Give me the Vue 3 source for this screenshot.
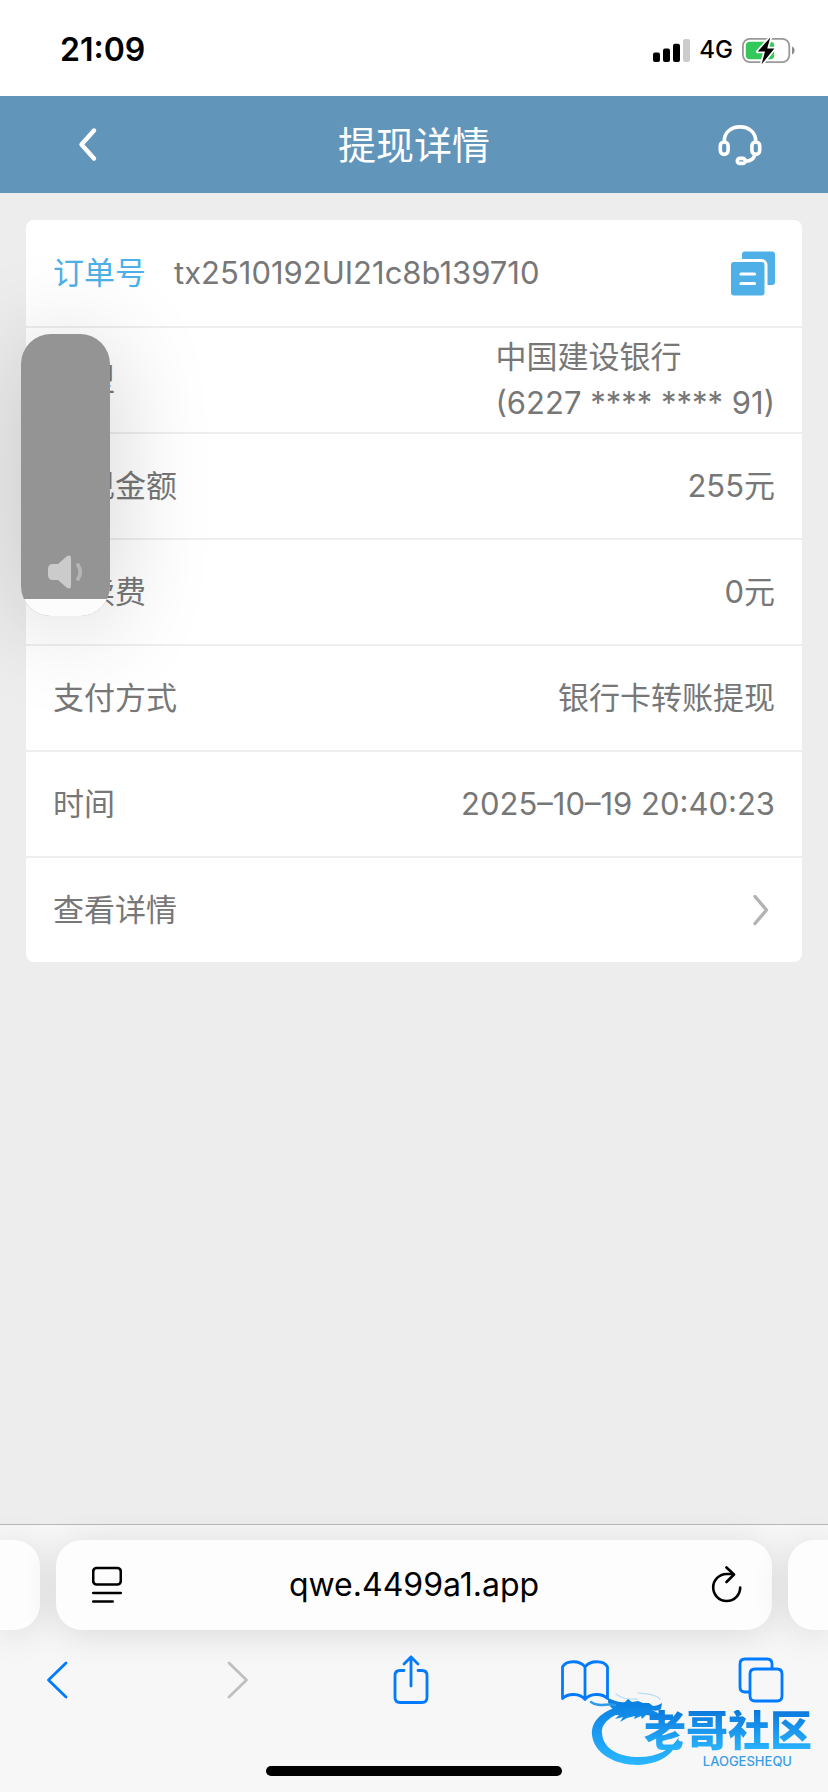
<template>
    <div class="page">
        <div class="status">
            <span class="time">21:09</span>
            <div class="status-right">
                <svg width="38" height="25" viewBox="0 0 38 25">
                    <rect x="0" y="14.5" width="7" height="9.5" rx="2" />
                    <rect x="10" y="10.5" width="7" height="13.5" rx="2" />
                    <rect x="20" y="5.8" width="7" height="18.2" rx="2" />
                    <rect x="30" y="1" width="7" height="23" rx="2" fill="#cccccc" />
                </svg>
                <span class="network">4G</span>
                <svg width="56" height="29" viewBox="0 0 56 29">
                    <rect x="1.9" y="2.9" width="46.4" height="23.2" rx="7" fill="none" stroke="#999" stroke-width="1.8" />
                    <rect x="4.8" y="5.8" width="28.4" height="17.4" rx="4" fill="#34c759" />
                    <path d="M51 10.5c3.4 1.2 3.4 6.8 0 8z" fill="#8c8c8c" />
                    <path d="M29.3 1.5 16.8 15.6H24l-3.4 12.6 12.8-15.8h-7.2z" stroke="#fff" stroke-width="3.5" paint-order="stroke" stroke-linejoin="round" />
                </svg>
            </div>
        </div>

        <header class="header">
            <button class="icon-btn" aria-label="返回">
                <svg width="20" height="36" viewBox="0 0 20 36">
                    <path d="M16 3.5 3.5 17.5 16 31.5" fill="none" stroke="#fff" stroke-width="4.4" stroke-linecap="round" stroke-linejoin="round" />
                </svg>
            </button>
            <h1>提现详情</h1>
            <button class="icon-btn" aria-label="客服">
                <svg width="44" height="42" viewBox="0 0 44 42" fill="none" stroke="#fff" stroke-width="3.6" stroke-linecap="round">
                    <path d="M6.3 17C6.3 8.5 13 2.9 22 2.9S37.7 8.5 37.7 17" />
                    <rect x="2.3" y="18" width="7.8" height="12.4" rx="3.9" />
                    <rect x="33.9" y="18" width="7.8" height="12.4" rx="3.9" />
                    <rect x="19.3" y="34.4" width="8" height="5" rx="2.5" />
                    <path d="M28 37.2c5 0 7.5-2.2 8.8-6" />
                </svg>
            </button>
        </header>

        <main class="content">
            <section class="card">
                <div class="row">
                    <span class="order-label">订单号</span>
                    <span class="order-no">{{ orderNo }}</span>
                    <button class="icon-btn" aria-label="复制" @click="copyOrder">
                        <svg width="44" height="45" viewBox="0 0 44 45" fill="#4eb0e7">
                            <path d="M14 .5h27a3 3 0 0 1 3 3V31a3 3 0 0 1-3 3h-4.5V14a6 6 0 0 0-6-6H11V3.5a3 3 0 0 1 3-3z" />
                            <rect x="0" y="11" width="33.5" height="33.5" rx="3" />
                            <path d="M10 23h13.5M10 32.5h13.5" stroke="#fff" stroke-width="3.2" stroke-linecap="round" />
                        </svg>
                    </button>
                </div>
                <div class="row" v-for="item in rows" :key="item.label">
                    <span>{{ item.label }}</span>
                    <span class="value">{{ item.value }}</span>
                </div>
                <a class="row" href="#detail">
                    <span>查看详情</span>
                    <svg class="arrow" width="16" height="32" viewBox="0 0 16 32">
                        <path d="M2 2.5 13.5 16 2 29.5" fill="none" stroke="#b3b3b3" stroke-width="3.4" stroke-linecap="round" stroke-linejoin="round" />
                    </svg>
                </a>
            </section>
        </main>

        <label class="volume">
            <span class="volume-body">
                <span class="volume-level" :style="{ height: volume + '%' }"></span>
                <svg width="36" height="34" viewBox="0 0 36 34">
                    <path d="M5 9h5L18.5 1.5Q23-1 23 3.5V30.5Q23 35 18.5 32.5L10 25H5Q0 25 0 20V14Q0 9 5 9z" fill="#cbcbcb" />
                    <path d="M30 10q4.5 7 0 14" fill="none" stroke="#b5b5b5" stroke-width="3.8" stroke-linecap="round" />
                </svg>
            </span>
            <input type="range" min="0" max="100" v-model="volume" aria-label="音量">
        </label>

        <footer class="browser">
            <div class="tabs">
                <div class="tab side left"></div>
                <div class="tab address">
                    <button class="icon-btn" aria-label="页面菜单">
                        <svg width="30" height="38" viewBox="0 0 30 38" fill="none" stroke="#000" stroke-width="2.6" stroke-linecap="round">
                            <rect x="1.2" y="2" width="27.6" height="16.5" rx="3.5" />
                            <path d="M1.2 27h27.6M1.2 35.5h19.5" />
                        </svg>
                    </button>
                    <input type="text" v-model="url" aria-label="网址">
                    <button class="icon-btn" aria-label="刷新">
                        <svg width="36" height="38" viewBox="-6 0 36 38" fill="none" stroke="#000" stroke-width="2.6" stroke-linecap="round" stroke-linejoin="round">
                            <path d="M28.2 21.5A13.5 13.5 0 1 1 14.7 8H21" />
                            <path d="M14.5 1.500 22 8.500l-7.500 7.500" />
                        </svg>
                    </button>
                </div>
                <div class="tab side right"></div>
            </div>
            <nav class="toolbar">
                <button class="icon-btn" v-for="tool in tools" :key="tool.name" :aria-label="tool.name" :disabled="tool.disabled">
                    <svg width="60" height="60" viewBox="0 0 60 60" fill="none" stroke="currentColor" stroke-width="2.8" stroke-linecap="round" stroke-linejoin="round">
                        <path :d="tool.path" />
                    </svg>
                </button>
            </nav>
            <div class="home"></div>

            <div class="watermark">
                <svg width="94" height="80" viewBox="0 0 94 80">
                    <defs>
                        <linearGradient id="dragon" gradientUnits="userSpaceOnUse" x1="0" y1="10" x2="0" y2="76">
                            <stop offset="0.1" stop-color="#0b82e3" />
                            <stop offset="1" stop-color="#2ab6ff" />
                        </linearGradient>
                    </defs>
                    <!-- body -->
                    <path fill="url(#dragon)" d="M32 18C12 24 3 34 4 47c2 18 22 30 46 30 21-1 37-10 41-28-8 13-22 20-40 20-20 0-36-8-37-24-1-9 8-18 26-22z" />
                    <!-- head and mane -->
                    <path fill="url(#dragon)" d="M20 10c6 2 10 5 17 4l3-3 4 3 6-1 5 2 6 0 4 3c3 0 6-1 9-3l-1 6c-3 2-6 2-9 1l8 4-2 3c-5 0-8-2-12-2l-4 4-1-3-7 3 1-3-8 2-7 4 3-5-8 2 4-4-8 0 5-4c-4-2-7-5-8-9z" />
                    <g fill="none" stroke="#2f9be8" stroke-linecap="round">
                        <path d="M3 14c8 6 15 1 24 3" stroke-width="2.4" />
                        <path d="M28 6c7 6 14 5 22 5M50 5c9 1 17 1 22 6" stroke-width="1.2" opacity="0.3" />
                    </g>
                </svg>
                <div class="brand">
                    <strong>老哥社区</strong>
                    <small>LAOGESHEQU</small>
                </div>
            </div>
        </footer>
    </div>
</template>

<script setup>

import { ref, reactive } from 'vue'

const orderNo = ref('tx2510192UI21c8b139710')
const url = ref('qwe.4499a1.app')
const volume = ref(6)

const rows = reactive([
    { label: '类型', value: '中国建设银行\n(6227 **** **** 91)' },
    { label: '提现金额', value: '255元' },
    { label: '手续费', value: '0元' },
    { label: '支付方式', value: '银行卡转账提现' },
    { label: '时间', value: '2025–10–19 20:40:23' },
])

const tools = [
    { name: '后退', path: 'M39 13 21.5 30 39 47' },
    { name: '前进', path: 'M26 13 43.5 30 26 47', disabled: true },
    {
        name: '分享',
        path: 'M25 20.5h-4q-5 0-5 5v22q0 5 5 5h22q5 0 5-5v-22q0-5-5-5h-4M32 36V7M25 14l7-7 7 7',
    },
    {
        name: '书签',
        path: 'M31 17C26 10 12 10 8.5 17V48.5C14 43 26 43 31 49.5 36 43 48 43 53.5 48.5V17C50 10 36 10 31 17zV49.5',
    },
    {
        name: '标签页',
        path: 'M19 42h-4q-5 0-5-5V14q0-5 5-5h22q5 0 5 5v4M25 19h22q5 0 5 5v22q0 5-5 5H25q-5 0-5-5V24q0-5 5-5z',
    },
]

const copyOrder = () => {
    navigator.clipboard?.writeText(orderNo.value)
}

</script>

<style>
body {
    margin: 0;
    background: #ededed;
}
</style>

<style scoped>
.page {
    position: relative;
    display: flex;
    flex-direction: column;
    min-height: 100vh;
    overflow: hidden;
    background: #ededed;
    color: #777777;
    font-family: Inter, "Noto Sans CJK SC", sans-serif;
    font-size: 31px;
    line-height: 46px;
}

button,
input {
    font: inherit;
    border: 0;
    padding: 0;
    background: none;
}

svg {
    display: block;
    flex: none;
}

.icon-btn {
    display: flex;
    align-items: center;
    justify-content: center;
    cursor: pointer;
}

.status {
    display: flex;
    align-items: center;
    justify-content: space-between;
    height: 96px;
    padding: 4px 31px 0 60px;
    box-sizing: border-box;
    background: #fff;
    color: #000;
}

.time {
    font-size: 32px;
    font-weight: 600;
}

.status-right {
    display: flex;
    align-items: center;
    gap: 8px;
}

.network {
    font-size: 24px;
    font-weight: 500;
}

.header {
    display: flex;
    align-items: center;
    justify-content: space-between;
    height: 97px;
    padding: 0 66px;
    background: #6295ba;
    color: #fff;
}

.header .icon-btn {
    width: 44px;
    height: 60px;
}

.header h1 {
    margin: 0;
    font-size: 38px;
    font-weight: 400;
}

.content {
    padding: 27px 26px;
}

.card {
    border-radius: 8px;
    background: #fff;
}

.row {
    display: flex;
    align-items: center;
    justify-content: space-between;
    min-height: 106px;
    padding: 0 27px;
    box-sizing: border-box;
    border-top: 2px solid #eeeeee;
    color: inherit;
    text-decoration: none;
}

.row:first-child {
    border-top: 0;
}

.order-label {
    color: #4eb0e7;
}

.order-no {
    flex: 1;
    padding-left: 28px;
}

.value {
    white-space: pre-line;
}

.arrow {
    margin-right: 6px;
}

.volume {
    position: absolute;
    top: 334px;
    left: 21px;
    width: 89px;
    height: 282px;
    border-radius: 30px;
    box-shadow: 0 8px 100px rgba(0, 0, 0, 0.18);
}

.volume-body {
    display: flex;
    flex-direction: column-reverse;
    align-items: center;
    gap: 10px;
    height: 100%;
    border-radius: 30px;
    overflow: hidden;
    background: #949494;
}

.volume-level {
    flex: none;
    width: 100%;
    background: #fcfcfc;
}

.volume input {
    position: absolute;
    inset: 0;
    width: 100%;
    height: 100%;
    margin: 0;
    writing-mode: vertical-lr;
    direction: rtl;
    opacity: 0;
}

.browser {
    position: relative;
    margin-top: auto;
    border-top: 1px solid #b8b8b8;
    background: #f7f7f7;
    color: #000;
}

.tabs {
    display: flex;
    gap: 16px;
    padding-top: 15px;
}

.tab {
    height: 90px;
    border-radius: 26px;
    background: #fdfdfd;
    box-shadow: 0 4px 36px rgba(0, 0, 0, 0.12);
}

.side {
    width: 40px;
}

.left {
    border-radius: 0 26px 26px 0;
}

.right {
    border-radius: 26px 0 0 26px;
}

.address {
    display: flex;
    align-items: center;
    flex: 1;
    padding: 0 30px 0 36px;
}

.address input {
    flex: 1;
    min-width: 0;
    color: #000;
    font-size: 32px;
    text-align: center;
    outline: 0;
}

.toolbar {
    display: flex;
    justify-content: space-between;
    padding: 20px 38px 0 27px;
}

.toolbar .icon-btn {
    color: #007aff;
}

.toolbar .icon-btn:disabled {
    color: #bfbfbf;
}

.home {
    width: 296px;
    height: 10px;
    margin: 56px auto 16px;
    border-radius: 5px;
    background: #000;
}

.watermark {
    position: absolute;
    right: 16px;
    bottom: 24px;
    display: flex;
}

.brand {
    display: flex;
    flex-direction: column;
    align-items: flex-end;
    gap: 2px;
    margin-left: -38px;
    padding-top: 22px;
}

.brand strong {
    background: linear-gradient(#0b78dc, #2ab6ff);
    background-clip: text;
    color: transparent;
    font-size: 42px;
    font-weight: 900;
    line-height: 42px;
}

.brand small {
    padding-right: 20px;
    color: #3a9de8;
    font-size: 13px;
    font-weight: 500;
    line-height: 14px;
}
</style>
